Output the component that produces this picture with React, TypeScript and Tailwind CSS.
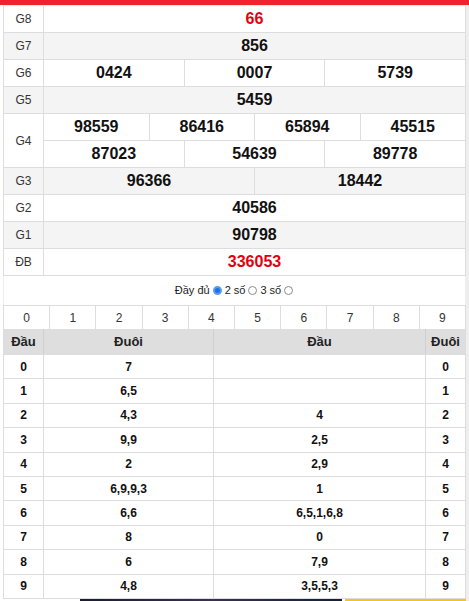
import React from 'react';

// Bảng kết quả xổ số + bảng lô tô đầu/đuôi
type Prize = { label: string; rows: string[][]; red?: boolean; shade?: boolean };

const prizes: Prize[] = [
  { label: 'G8', rows: [['66']], red: true },
  { label: 'G7', rows: [['856']], shade: true },
  { label: 'G6', rows: [['0424', '0007', '5739']] },
  { label: 'G5', rows: [['5459']], shade: true },
  { label: 'G4', rows: [['98559', '86416', '65894', '45515'], ['87023', '54639', '89778']] },
  { label: 'G3', rows: [['96366', '18442']], shade: true },
  { label: 'G2', rows: [['40586']] },
  { label: 'G1', rows: [['90798']], shade: true },
  { label: 'ĐB', rows: [['336053']], red: true },
];

const loto: [string, string, string, string][] = [
  ['0', '7', '', '0'],
  ['1', '6,5', '', '1'],
  ['2', '4,3', '4', '2'],
  ['3', '9,9', '2,5', '3'],
  ['4', '2', '2,9', '4'],
  ['5', '6,9,9,3', '1', '5'],
  ['6', '6,6', '6,5,1,6,8', '6'],
  ['7', '8', '0', '7'],
  ['8', '6', '7,9', '8'],
  ['9', '4,8', '3,5,5,3', '9'],
];

const Radio = ({ checked }: { checked?: boolean }) =>
  checked ? (
    <span className="inline-block w-[9px] h-[9px] rounded-full bg-[#1a73e8] border-[2px] border-[#5c9cf0] mx-[1px] box-border" />
  ) : (
    <span className="inline-block w-[9px] h-[9px] rounded-full border border-[#8a8a8a] bg-white mx-[1px]" />
  );

const PrizeRow = ({ p }: { p: Prize }) => {
  const bg = p.shade ? 'bg-[#f4f4f4]' : 'bg-white';
  return (
    <div className={`flex ${bg}`}>
      <div className="w-[40px] shrink-0 flex items-center justify-center border-r border-b border-[#ddd] text-[12px] text-[#333]">
        {p.label}
      </div>
      <div className="flex-1 flex flex-col">
        {p.rows.map((cells, i) => (
          <div key={i} className="flex h-[27px] border-b border-[#ddd]">
            {cells.map((n, j) => (
              <div
                key={j}
                className={`flex-1 flex items-center justify-center text-[16px] font-bold ${
                  p.red ? 'text-[#e3000f]' : 'text-[#111]'
                } ${j < cells.length - 1 ? 'border-r border-[#ddd]' : ''}`}
              >
                {n}
              </div>
            ))}
          </div>
        ))}
      </div>
    </div>
  );
};

export default function App() {
  return (
    <div className="w-[469px] h-[601px] overflow-hidden bg-white font-['Liberation_Sans',Arial,sans-serif]">
      <div className="h-[5px] bg-[#f2212f]" />
      <div className="flex">
        <div className="w-[3px] shrink-0" />
        <div className="w-[463px] shrink-0">
          {/* Kết quả */}
          <div className="border-x border-t border-[#ddd] border-t-[#eee]">
            {prizes.map((p) => (
              <PrizeRow key={p.label} p={p} />
            ))}
          </div>

          {/* Chọn kiểu hiển thị */}
          <div className="h-[29px] flex items-center justify-center gap-[2px] text-[11px] text-[#222] border-x border-[#eee]">
            <span>Đầy đủ</span>
            <Radio checked />
            <span>2 số</span>
            <Radio />
            <span>3 số</span>
            <Radio />
          </div>

          {/* Hàng số 0-9 */}
          <div className="flex h-[24px] border-t border-x border-[#ddd]">
            {Array.from({ length: 10 }, (_, i) => (
              <div
                key={i}
                className={`flex-1 flex items-center justify-center text-[12px] text-[#333] ${
                  i < 9 ? 'border-r border-[#ddd]' : ''
                }`}
              >
                {i}
              </div>
            ))}
          </div>

          {/* Bảng lô tô */}
          <div className="border-x border-b border-[#ddd]">
            <div className="flex h-[25px] bg-[#dedede] text-[13px] font-bold text-[#222]">
              <div className="w-[40px] flex items-center justify-center border-r border-[#cfcfcf]">Đầu</div>
              <div className="w-[170px] flex items-center justify-center border-r border-[#cfcfcf]">Đuôi</div>
              <div className="w-[212px] flex items-center justify-center border-r border-[#cfcfcf]">Đầu</div>
              <div className="flex-1 flex items-center justify-center">Đuôi</div>
            </div>
            {loto.map((r) => (
              <div key={r[0]} className="flex h-[24.4px] border-t border-[#ddd] text-[12px] font-bold text-[#111]">
                <div className="w-[40px] flex items-center justify-center border-r border-[#ddd]">{r[0]}</div>
                <div className="w-[170px] flex items-center justify-center border-r border-[#ddd]">{r[1]}</div>
                <div className="w-[212px] flex items-center justify-center border-r border-[#ddd]">{r[2]}</div>
                <div className="flex-1 flex items-center justify-center">{r[3]}</div>
              </div>
            ))}
          </div>

          {/* Banner phía dưới */}
          <div className="flex h-[6px]">
            <div className="w-[77px]" />
            <div className="w-[262px] bg-gradient-to-r from-[#1b1d2e] via-[#3a2f52] to-[#14203a]" />
            <div className="w-[3px] bg-white" />
            <div className="flex-1 bg-[#f5c518]" />
          </div>
        </div>
        <div className="w-[3px] shrink-0 bg-[#eeeeee]" />
      </div>
    </div>
  );
}
